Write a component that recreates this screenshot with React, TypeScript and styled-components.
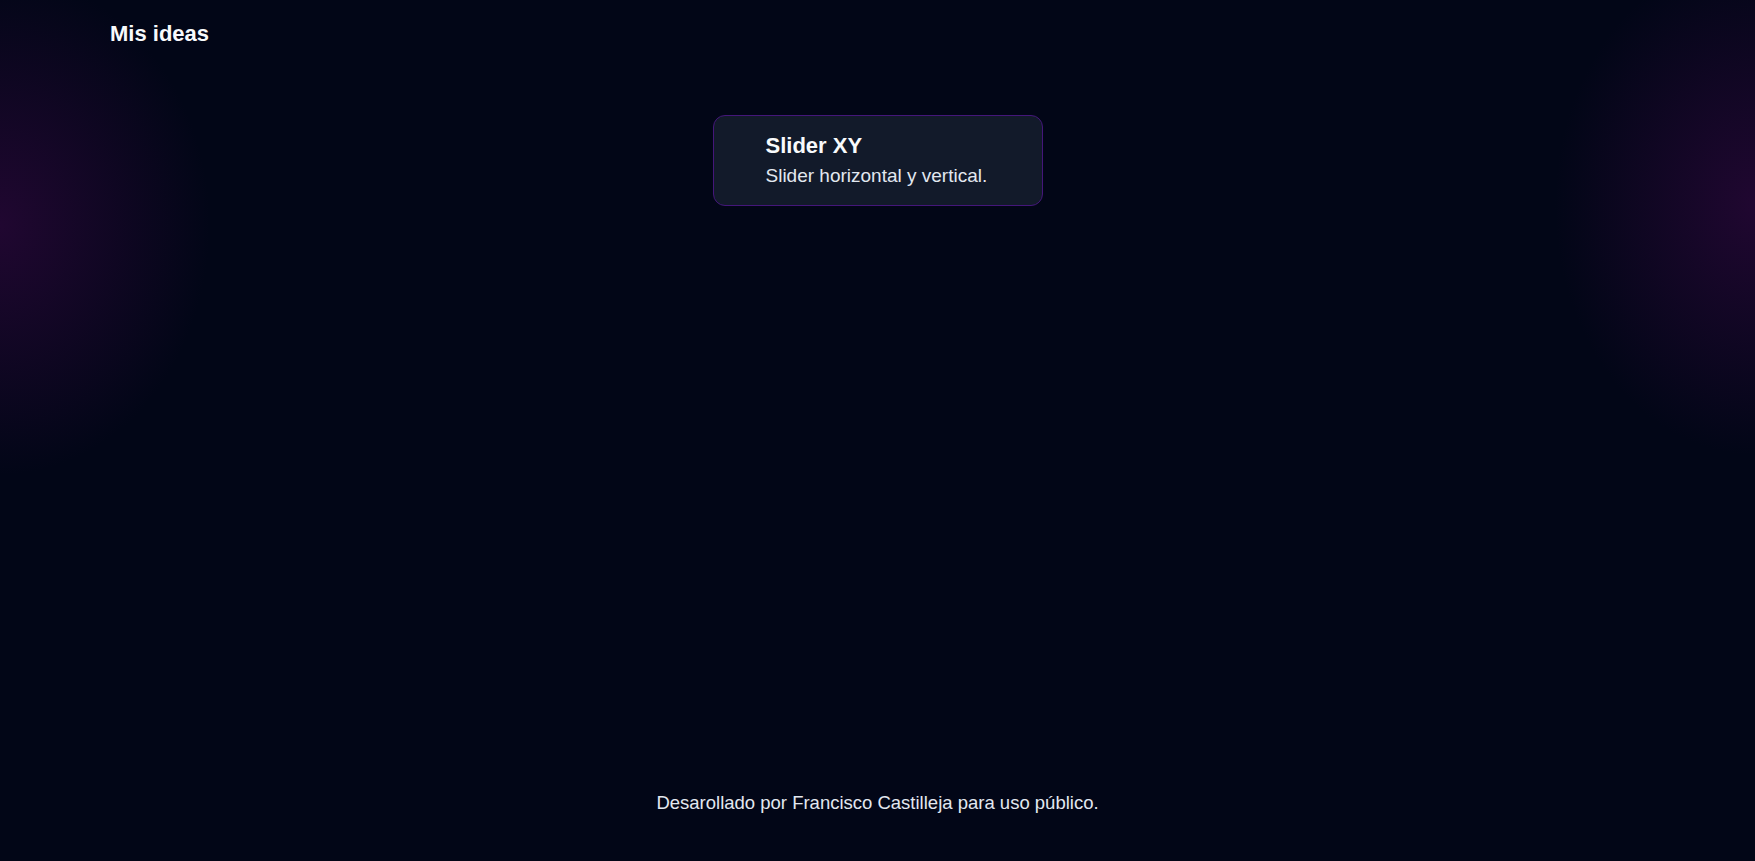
import React from "react";
import styled, { createGlobalStyle } from "styled-components";

const GlobalStyle = createGlobalStyle`
  html, body {
    margin: 0;
    padding: 0;
    background: #020617;
  }
  * { box-sizing: border-box; }
  body {
    font-family: "Liberation Sans", Arial, sans-serif;
    color: #f1f5f9;
  }
`;

const Page = styled.div`
  min-height: 100vh;
  display: flex;
  flex-direction: column;
  background:
    radial-gradient(ellipse 210px 250px at 0px 225px, rgba(34, 7, 50, 0.95), rgba(34, 7, 50, 0) 100%),
    radial-gradient(ellipse 200px 250px at 100% 205px, rgba(34, 7, 50, 0.95), rgba(34, 7, 50, 0) 100%),
    #020617;
`;

const Header = styled.header`
  padding: 21px 110px 0;
`;

const Title = styled.h1`
  margin: 0;
  font-size: 22px;
  line-height: 1.2;
  font-weight: 700;
  color: #f8fafc;
`;

const Main = styled.main`
  flex: 1;
  display: flex;
  justify-content: center;
  align-items: flex-start;
  padding-top: 68px;
`;

const Card = styled.a`
  width: 330px;
  padding: 16.5px 20px 16.5px 52px;
  border: 1px solid #44167a;
  border-radius: 12px;
  background: #121a2a;
  display: flex;
  flex-direction: column;
  gap: 6px;
  text-decoration: none;
  color: inherit;
`;

const CardTitle = styled.h2`
  margin: 0;
  font-size: 22px;
  line-height: 1.2;
  font-weight: 700;
  color: #f8fafc;
`;

const CardText = styled.p`
  margin: 0;
  font-size: 19px;
  line-height: 1.2;
  color: #e2e8f0;
`;

const Footer = styled.footer`
  padding-bottom: 47px;
  text-align: center;
  font-size: 18.5px;
  line-height: 1.2;
  color: #e2e8f0;
`;

export default function App() {
  return (
    <>
      <GlobalStyle />
      <Page>
        <Header>
          <Title>Mis ideas</Title>
        </Header>
        <Main>
          <Card href="#">
            <CardTitle>Slider XY</CardTitle>
            <CardText>Slider horizontal y vertical.</CardText>
          </Card>
        </Main>
        <Footer>Desarollado por Francisco Castilleja para uso público.</Footer>
      </Page>
    </>
  );
}
